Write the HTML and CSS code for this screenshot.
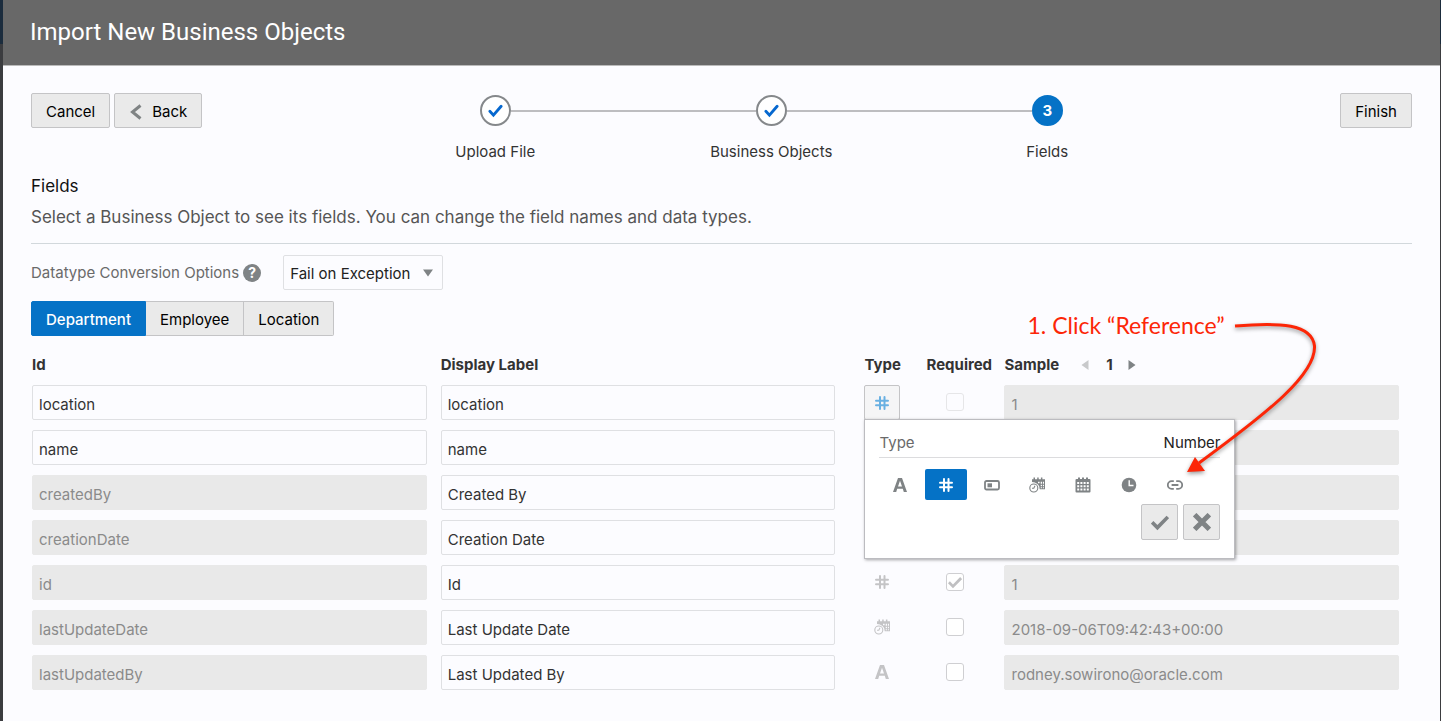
FILE: index.html
```html
<!DOCTYPE html>
<html lang="en">
<head>
<meta charset="utf-8">
<meta name="viewport" content="width=device-width, initial-scale=1">
<title>Import New Business Objects</title>
<link rel="stylesheet" href="styles.css">
</head>
<body>
<svg class="symbols" aria-hidden="true">
  <symbol id="i-text" viewBox="0 0 16 16"><path fill="currentColor" fill-rule="evenodd" d="M6 1h4l5 14h-3.200l-1-3.200H5.200l-1 3.200H1zM8 3.800 6 9.400h4z"/></symbol>
  <symbol id="i-number" viewBox="0 0 16 16"><path fill="none" stroke="currentColor" stroke-width="2" stroke-linecap="round" d="M6 2v12M10.500 2v12M2 5.800h12M2 10.200h12"/></symbol>
  <symbol id="i-boolean" viewBox="0 0 16 16"><rect x="1" y="4" width="14" height="8.500" rx="1.500" fill="none" stroke="currentColor" stroke-width="1.800"/><path fill="currentColor" d="M3.500 6.300h4.500v4H3.500z"/></symbol>
  <symbol id="i-date" viewBox="0 0 16 16"><path fill="currentColor" fill-rule="evenodd" d="M.5 3q0-1 1-1H3V.5h2V2h2V.5h2V2h2V.5h2V2h1.500q1 0 1 1v11.500q0 1-1 1h-13q-1 0-1-1zM2.200 5v2h2V5zm3.200 0v2h2V5zm3.200 0v2h2V5zm3.200 0v2h2V5zM2.200 8.200v2h2v-2zm3.200 0v2h2v-2zm3.200 0v2h2v-2zm3.200 0v2h2v-2zM2.200 11.500v2h2v-2zm3.200 0v2h2v-2zm3.200 0v2h2v-2zm3.200 0v2h2v-2z"/></symbol>
  <symbol id="i-datetime" viewBox="0 0 16 16"><path fill="currentColor" fill-rule="evenodd" d="M3 5V2.300h1.500V.5H6v1.800h2.200V.5h1.500v1.800h2.200V.5h1.500v1.800H16v9.900h-5.300q.2-3.500-2.200-5.200Q6 5 3 5m6-.2v1.400h1.600V4.800zm2.700 0v1.900h1.300V4.800zm2.200 0v1.900h1.100V4.800zm-2.200 3v1.400h1.300V7.800zm2.200 0v1.400h1.100V7.800zm-2.200 2.500v1h1.300v-1zm2.200 0v1h1.100v-1z"/><circle cx="4.800" cy="11" r="4" fill="none" stroke="currentColor" stroke-width="1.100"/><path fill="none" stroke="currentColor" stroke-width="1.100" d="M6 8.800 4.800 11.200H3"/></symbol>
  <symbol id="i-time" viewBox="0 0 16 16"><circle cx="8" cy="8" r="7.300" fill="currentColor"/><path fill="none" stroke="#fff" stroke-width="1.400" d="M8.200 3.200v5.300h4.300"/></symbol>
  <symbol id="i-link" viewBox="0 0 16 16"><path fill="none" stroke="currentColor" stroke-width="1.800" d="M6.800 4.200H4.600a3.800 3.800 0 0 0 0 7.600h2.200M9.200 4.200h2.200a3.800 3.800 0 0 1 0 7.600H9.200M4.600 8h6.800"/></symbol>
  <symbol id="i-check" viewBox="0 0 16 16"><path fill="none" stroke="currentColor" stroke-width="3.200" d="M1 8.300 5.700 13 15 3.500"/></symbol>
  <symbol id="i-cross" viewBox="0 0 16 16"><path fill="none" stroke="currentColor" stroke-width="4.400" d="m1.500 1.500 13 13M14.500 1.500l-13 13"/></symbol>
</svg>

<main class="dialog">
  <header class="dialog-header"><h1 class="dialog-title">Import New Business Objects</h1></header>
  <div class="dialog-body">
    <div class="wizard-bar">
      <div class="wizard-back">
        <button type="button" class="btn">Cancel</button>
        <button type="button" class="btn btn-back"><svg class="chevron" viewBox="0 0 12 16" aria-hidden="true"><path fill="none" stroke="currentColor" stroke-width="3" d="M10.500 1.500 2.500 8l8 6.500"/></svg>Back</button>
      </div>
      <ol class="train">
        <li class="step"><span class="step-line step-line-none"></span><span class="step-dot"><svg viewBox="0 0 16 16" role="img" aria-label="Done"><path fill="none" stroke="currentColor" stroke-width="3" stroke-linecap="round" d="M2 8.800 5.800 13 14 3.500"/></svg></span><span class="step-line"></span><span class="step-label">Upload File</span></li>
        <li class="step"><span class="step-line"></span><span class="step-dot"><svg viewBox="0 0 16 16" role="img" aria-label="Done"><path fill="none" stroke="currentColor" stroke-width="3" stroke-linecap="round" d="M2 8.800 5.800 13 14 3.500"/></svg></span><span class="step-line"></span><span class="step-label">Business Objects</span></li>
        <li class="step" aria-current="step"><span class="step-line"></span><span class="step-dot step-dot-current">3</span><span class="step-line step-line-none"></span><span class="step-label">Fields</span></li>
      </ol>
      <button type="button" class="btn">Finish</button>
    </div>

    <div class="intro">
      <h2 class="intro-title">Fields</h2>
      <p class="intro-text">Select a Business Object to see its fields. You can change the field names and data types.</p>
    </div>

    <div class="options">
      <label class="options-label" for="conversion">Datatype Conversion Options</label>
      <button type="button" class="help" aria-label="Help">?</button>
      <div class="select-wrap">
        <select id="conversion" class="select"><option>Fail on Exception</option></select>
        <svg class="select-arrow" viewBox="0 0 10 8" aria-hidden="true"><path fill="currentColor" d="M0 .5h10L5 7.500z"/></svg>
      </div>
    </div>

    <div class="tabs">
      <button type="button" class="tab tab-active" aria-pressed="true">Department</button>
      <button type="button" class="tab">Employee</button>
      <button type="button" class="tab">Location</button>
    </div>

    <table class="fields">
      <colgroup><col class="col-id"><col class="col-label"><col class="col-type"><col class="col-required"><col></colgroup>
      <thead>
        <tr>
          <th scope="col">Id</th><th scope="col">Display Label</th><th scope="col">Type</th><th scope="col">Required</th>
          <th scope="col"><div class="sample-head"><span>Sample</span>
            <button type="button" class="pager pager-off" aria-label="Previous sample" disabled><svg viewBox="0 0 8 10"><path fill="currentColor" d="M7.500 0v10L.5 5z"/></svg></button>
            <span>1</span>
            <button type="button" class="pager" aria-label="Next sample"><svg viewBox="0 0 8 10"><path fill="currentColor" d="M.5 0v10l7-5z"/></svg></button></div></th>
        </tr>
      </thead>
      <tbody>
        <tr>
          <td class="cell-id"><input class="field" aria-label="Id" value="location"></td>
          <td class="cell-label"><input class="field" aria-label="Display Label" value="location"></td>
          <td>
            <div class="type-anchor">
              <button type="button" class="type-btn" aria-label="Type: Number" aria-expanded="true"><svg class="icon"><use href="#i-number"/></svg></button>
              <div class="popup">
                <div class="popup-head"><span class="popup-name">Type</span><span>Number</span></div>
                <div class="type-list">
                  <button type="button" class="type-option" aria-label="String"><svg class="icon"><use href="#i-text"/></svg></button>
                  <button type="button" class="type-option type-option-on" aria-label="Number" aria-pressed="true"><svg class="icon"><use href="#i-number"/></svg></button>
                  <button type="button" class="type-option" aria-label="Boolean"><svg class="icon"><use href="#i-boolean"/></svg></button>
                  <button type="button" class="type-option" aria-label="Date and time"><svg class="icon"><use href="#i-datetime"/></svg></button>
                  <button type="button" class="type-option" aria-label="Date"><svg class="icon"><use href="#i-date"/></svg></button>
                  <button type="button" class="type-option" aria-label="Time"><svg class="icon"><use href="#i-time"/></svg></button>
                  <button type="button" class="type-option" aria-label="Reference"><svg class="icon"><use href="#i-link"/></svg></button>
                </div>
                <div class="popup-actions">
                  <button type="button" class="btn btn-icon" aria-label="Apply"><svg class="icon icon-action"><use href="#i-check"/></svg></button>
                  <button type="button" class="btn btn-icon" aria-label="Discard"><svg class="icon icon-action"><use href="#i-cross"/></svg></button>
                </div>
              </div>
              <div class="callout">
                <span class="callout-text">1. Click “Reference”</span>
                <svg class="callout-arrow" viewBox="1180 315 145 165" aria-hidden="true"><path fill="none" stroke="#fc2607" stroke-width="3" d="M1235 327C1280 323 1312 325 1314.500 347C1316 375 1270 412 1199 464"/><path fill="#fc2607" d="m1187 473 8-15 10 14z"/></svg>
              </div>
            </div>
          </td>
          <td class="cell-check"><input type="checkbox" class="check check-faint" aria-label="Required" disabled></td>
          <td><input class="field" aria-label="Sample" value="1" disabled></td>
        </tr>
        <tr>
          <td class="cell-id"><input class="field" aria-label="Id" value="name"></td>
          <td class="cell-label"><input class="field" aria-label="Display Label" value="name"></td>
          <td></td><td></td>
          <td><input class="field" aria-label="Sample" disabled></td>
        </tr>
        <tr>
          <td class="cell-id"><input class="field" aria-label="Id" value="createdBy" disabled></td>
          <td class="cell-label"><input class="field" aria-label="Display Label" value="Created By"></td>
          <td></td><td></td>
          <td><input class="field" aria-label="Sample" disabled></td>
        </tr>
        <tr>
          <td class="cell-id"><input class="field" aria-label="Id" value="creationDate" disabled></td>
          <td class="cell-label"><input class="field" aria-label="Display Label" value="Creation Date"></td>
          <td></td><td></td>
          <td><input class="field" aria-label="Sample" disabled></td>
        </tr>
        <tr>
          <td class="cell-id"><input class="field" aria-label="Id" value="id" disabled></td>
          <td class="cell-label"><input class="field" aria-label="Display Label" value="Id"></td>
          <td class="cell-type"><span class="type-icon"><svg class="icon" role="img" aria-label="Number"><use href="#i-number"/></svg></span></td>
          <td class="cell-check"><span class="check-wrap"><input type="checkbox" class="check" aria-label="Required" checked disabled><svg class="check-mark" aria-hidden="true"><use href="#i-check"/></svg></span></td>
          <td><input class="field" aria-label="Sample" value="1" disabled></td>
        </tr>
        <tr>
          <td class="cell-id"><input class="field" aria-label="Id" value="lastUpdateDate" disabled></td>
          <td class="cell-label"><input class="field" aria-label="Display Label" value="Last Update Date"></td>
          <td class="cell-type"><span class="type-icon"><svg class="icon" role="img" aria-label="Date and time"><use href="#i-datetime"/></svg></span></td>
          <td class="cell-check"><input type="checkbox" class="check" aria-label="Required" disabled></td>
          <td><input class="field" aria-label="Sample" value="2018-09-06T09:42:43+00:00" disabled></td>
        </tr>
        <tr>
          <td class="cell-id"><input class="field" aria-label="Id" value="lastUpdatedBy" disabled></td>
          <td class="cell-label"><input class="field" aria-label="Display Label" value="Last Updated By"></td>
          <td class="cell-type"><span class="type-icon"><svg class="icon" role="img" aria-label="String"><use href="#i-text"/></svg></span></td>
          <td class="cell-check"><input type="checkbox" class="check" aria-label="Required" disabled></td>
          <td><input class="field" aria-label="Sample" value="rodney.sowirono@oracle.com" disabled></td>
        </tr>
      </tbody>
    </table>
  </div>
</main>
</body>
</html>
```

FILE: styles.css
```css
*, *::before, *::after { box-sizing: border-box; }
body {
  margin: 0;
  padding: 0 1px 0 3px;
  background: linear-gradient(#1b2c3d 44px, #3b3c3f 44px);
  color: #333;
  font: 15px/20px Inter, "Liberation Sans", sans-serif;
}
button, input, select { font: inherit; color: inherit; margin: 0; }
button { cursor: pointer; }
.symbols { position: absolute; width: 0; height: 0; }

.dialog { min-height: 100vh; background: #fcfcff; }
.dialog-header { padding: 16px 27px; background: #686868; border-bottom: 1px solid #bbb; }
.dialog-title { margin: 0; color: #fff; font: 400 24px/33px Roboto, sans-serif; }
.dialog-body { padding: 27px 28px 28px; }

/* Wizard navigation */
.wizard-bar { display: flex; align-items: flex-start; }
.wizard-back { display: flex; gap: 4px; }
.btn {
  height: 35px; padding: 2px 14px 0; border: 1px solid #c4c4c6; border-radius: 2px;
  background: #eaeaea; color: #000;
}
.btn-back { display: flex; align-items: center; gap: 10px; padding-left: 15px; }
.chevron { width: 12px; height: 16px; color: #7f8384; }
.train { flex: 1; max-width: 828px; margin: 0 auto; padding: 2px 0 0; display: flex; list-style: none; }
.step { flex: 1; display: grid; grid-template-columns: 1fr auto 1fr; align-items: center; row-gap: 16px; }
.step-line { height: 2px; background: #bdbdc0; }
.step-line-none { background: none; }
.step-dot {
  display: flex; align-items: center; justify-content: center; width: 31px; height: 31px;
  border: 2px solid #85888b; border-radius: 50%; background: #fff; color: #0668cf;
}
.step-dot svg { width: 15px; height: 15px; }
.step-dot-current { border-color: #0572c6; background: #0572c6; color: #fff; font-weight: 700; }
.step-label { grid-column: 1 / -1; text-align: center; }

.intro { padding: 13px 0 16px; border-bottom: 1px solid #d2d8dc; }
.intro-title { margin: 0 0 10px; color: #111; font-size: 17px; line-height: 22px; font-weight: 400; }
.intro-text { margin: 0; color: #555; font-size: 17px; line-height: 20px; }

.options { display: flex; align-items: center; margin-top: 11px; }
.options-label { color: #6a6a6a; }
.help {
  width: 18px; height: 18px; margin: 0 22px 0 4px; padding: 0; border: 0; border-radius: 50%;
  background: #7f8385; color: #fff; font-size: 14px; line-height: 18px; font-weight: 700;
}
.select-wrap { position: relative; width: 160px; }
.select {
  appearance: none; width: 100%; height: 35px; padding: 2px 24px 0 6px; border: 1px solid #dfe0e3;
  border-radius: 2px; background: #fcfcff; color: #222;
}
.select-arrow { position: absolute; right: 10px; top: 14px; width: 10px; height: 8px; color: #7f8385; pointer-events: none; }

.tabs { display: flex; margin: 11px 0 19px; }
.tab {
  height: 35px; padding: 2px 14px 0; border: 1px solid #c4c4c6; border-left-width: 0;
  background: #eaeaea; color: #000;
}
.tab:last-child { border-radius: 0 2px 2px 0; }
.tab-active { border-color: #0572c6; border-left-width: 1px; border-radius: 2px 0 0 2px; background: #0572c6; color: #fff; font-weight: 500; }

/* Field table */
.fields { width: calc(100% - 14px); margin-left: 1px; table-layout: fixed; border-spacing: 0; }
.col-id { width: 29.9%; }
.col-label { width: 31%; }
.col-type { width: 62px; }
.col-required { width: 78px; }
th { padding: 0 0 10px; text-align: left; font-weight: 700; line-height: 20px; white-space: nowrap; }
td { height: 45px; padding: 0 0 10px; vertical-align: middle; }
.cell-id { padding-right: 14px; }
.cell-label { padding-right: 29px; }
.cell-type { padding-bottom: 12px; }
.cell-check { padding-left: 20px; padding-bottom: 12px; }
.field {
  display: block; width: 100%; height: 35px; padding: 4px 6px 0; border: 1px solid #dfe0e3;
  border-radius: 2px; background: #fcfcff;
}
.field:disabled { border-color: #e9e9e9; background: #e9e9e9; color: #8b8b8b; }
.sample-head { display: flex; align-items: center; }
.pager { display: flex; align-items: center; height: 20px; margin: 0 0 0 15px; padding: 0; border: 0; background: none; color: #7f8385; }
.pager-off { margin: 0 17px 0 22px; color: #c8c9cb; }
.pager svg { width: 8px; height: 10px; }

.icon { display: block; width: 16px; height: 16px; }
.icon-action { width: 18px; height: 18px; }
.type-icon { display: flex; justify-content: center; width: 36px; color: #c4c4c6; }
.check {
  appearance: none; display: block; width: 18px; height: 18px;
  border: 1px solid #cfcfd2; border-radius: 3px; background: #fff;
}
.check-faint { border-color: #e6e6e8; background: #fcfcff; }
.check-wrap { position: relative; display: block; width: 18px; }
.check-mark { position: absolute; inset: 2px; width: 14px; height: 14px; color: #c0c0c2; }

/* Type picker */
.type-anchor { position: relative; width: 36px; }
.type-btn {
  display: flex; align-items: center; justify-content: center; width: 36px; height: 35px; padding: 0;
  border: 1px solid #c4c4c6; border-radius: 2px; background: #f5f5f6; color: #68b0e2;
}
.popup {
  position: absolute; z-index: 1; top: 100%; left: 0; width: 371px; margin-top: -1px; padding: 13px 14px 18px;
  border: 1px solid #bcbcc0; background: #fff; box-shadow: 1px 1px 3px rgba(0, 0, 0, .35);
}
.popup-head { display: flex; justify-content: space-between; padding-bottom: 4px; border-bottom: 1px solid #dcdcde; color: #222; }
.popup-name { color: #6a6a6a; }
.type-list { display: grid; grid-template-columns: repeat(7, 1fr); gap: 4px; width: 316px; margin-top: 11px; }
.type-option {
  display: flex; align-items: center; justify-content: center; height: 31px; padding: 0;
  border: 0; border-radius: 2px; background: none; color: #7f8385;
}
.type-option-on { background: #0572c6; color: #fff; }
.popup-actions { display: flex; justify-content: flex-end; gap: 5px; margin-top: 4px; }
.btn-icon { display: flex; align-items: center; justify-content: center; width: 37px; height: 36px; padding: 0; color: #7f8385; }

/* Annotation over the picker */
.callout { position: absolute; z-index: 2; top: -71px; left: 163px; width: 298px; height: 165px; pointer-events: none; }
.callout-text { color: #fc2607; font: 400 23px/22px Lato, sans-serif; white-space: nowrap; }
.callout-arrow { position: absolute; right: 0; top: 0; width: 145px; height: 165px; filter: drop-shadow(0 2px 2px rgba(0, 0, 0, .4)); }
```
